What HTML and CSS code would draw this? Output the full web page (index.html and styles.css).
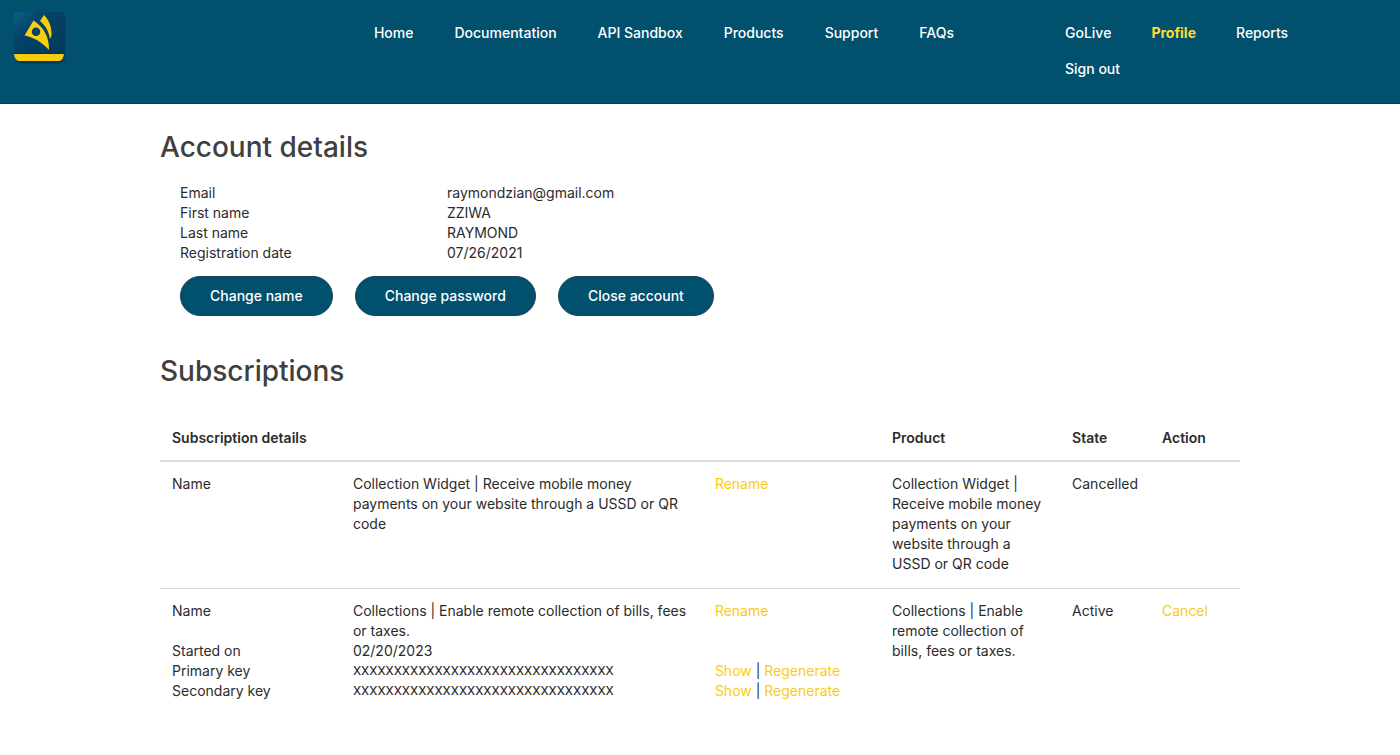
FILE: index.html
```html
<!DOCTYPE html>
<html lang="en">
<head>
<meta charset="utf-8">
<title>Profile</title>
<meta name="viewport" content="width=device-width, initial-scale=1">
<link rel="stylesheet" href="styles.css">
</head>
<body>
<header class="site-header">
  <a class="logo" href="#" aria-label="Developer portal home">
    <svg width="56" height="56" viewBox="0 0 56 56" aria-hidden="true">
      <defs>
        <linearGradient id="tile" x1="0" y1="0" x2="1" y2="1">
          <stop offset="0" stop-color="#0a5f86"/>
          <stop offset="0.35" stop-color="#034268"/>
          <stop offset="1" stop-color="#033a5c"/>
        </linearGradient>
      </defs>
      <path d="M7 3h43q3 0 3 4v39q0 8-6 8H9q-5 0-6-5z" fill="#022b41" opacity="0.45"/>
      <path d="M5 2h43q4 0 4 4v40H2V5q0-3 3-3z" fill="url(#tile)"/>
      <path d="M2 43h50v2H2z" fill="#02304a"/>
      <path d="M2 44h50q-1 7-5 7H7q-4 0-5-7z" fill="#f5cc10"/>
      <path fill-rule="evenodd" d="M21.500 10.500L12.500 25.500c9 2 17 6 24.500 14.500C37.500 28 32 17 21.500 10.500zM24 17.500a4.300 4.300 0 1 1 0 8.600 4.300 4.300 0 1 1 0-8.600z" fill="#f9cf0d"/>
      <path d="M32 5L28 11c6 5 9 11 10 18q2-3 1.500-7C39 16 37 10 32 5z" fill="#f9cf0d"/>
    </svg>
  </a>
  <nav class="nav nav-main" aria-label="Main">
    <a href="#">Home</a>
    <a href="#">Documentation</a>
    <a href="#">API Sandbox</a>
    <a href="#">Products</a>
    <a href="#">Support</a>
    <a href="#">FAQs</a>
  </nav>
  <nav class="nav nav-user" aria-label="Account">
    <a href="#">GoLive</a>
    <a class="active" href="#" aria-current="page">Profile</a>
    <a href="#">Reports</a>
    <a href="#">Sign out</a>
  </nav>
</header>
<main class="page">
  <section>
    <h1 class="heading">Account details</h1>
    <div class="account">
      <dl class="facts">
        <dt>Email</dt><dd>raymondzian@gmail.com</dd>
        <dt>First name</dt><dd>ZZIWA</dd>
        <dt>Last name</dt><dd>RAYMOND</dd>
        <dt>Registration date</dt><dd>07/26/2021</dd>
      </dl>
      <div class="buttons">
        <button class="btn" type="button">Change name</button>
        <button class="btn" type="button">Change password</button>
        <button class="btn" type="button">Close account</button>
      </div>
    </div>
  </section>
  <section class="subscriptions">
    <h1 class="heading">Subscriptions</h1>
    <table class="table">
      <thead>
        <tr>
          <th class="col-details" scope="col">Subscription details</th>
          <th class="col-product" scope="col">Product</th>
          <th class="col-state" scope="col">State</th>
          <th class="col-action" scope="col">Action</th>
        </tr>
      </thead>
      <tbody>
        <tr>
          <td>
            <div class="details">
              <span>Name</span>
              <span>Collection Widget | Receive mobile money payments on your website through a USSD or QR code</span>
              <span><a class="link" href="#">Rename</a></span>
            </div>
          </td>
          <td>Collection Widget | Receive mobile money payments on your website through a USSD or QR code</td>
          <td>Cancelled</td>
          <td></td>
        </tr>
        <tr>
          <td>
            <div class="details">
              <span>Name</span>
              <span>Collections | Enable remote collection of bills, fees or taxes.</span>
              <span><a class="link" href="#">Rename</a></span>
            </div>
            <div class="details">
              <span>Started on</span>
              <span>02/20/2023</span>
            </div>
            <div class="details">
              <span>Primary key</span>
              <span class="key">XXXXXXXXXXXXXXXXXXXXXXXXXXXXXXXX</span>
              <span><a class="link" href="#">Show</a> | <a class="link" href="#">Regenerate</a></span>
            </div>
            <div class="details">
              <span>Secondary key</span>
              <span class="key">XXXXXXXXXXXXXXXXXXXXXXXXXXXXXXXX</span>
              <span><a class="link" href="#">Show</a> | <a class="link" href="#">Regenerate</a></span>
            </div>
          </td>
          <td>Collections | Enable remote collection of bills, fees or taxes.</td>
          <td>Active</td>
          <td><a class="link" href="#">Cancel</a></td>
        </tr>
      </tbody>
    </table>
  </section>
</main>
</body>
</html>
```
FILE: styles.css
```css
* {
  box-sizing: border-box;
}

body {
  margin: 0;
  background: #fff;
  color: #2b2b2b;
  font-family: Inter, "Liberation Sans", sans-serif;
  font-size: 14px;
  line-height: 20px;
}

a {
  text-decoration: none;
}

.site-header {
  display: flex;
  align-items: flex-start;
  background: #00506e;
  border-bottom: 1px solid #003a5c;
  padding: 10px 100px 16px 12px;
}

.logo {
  display: block;
  line-height: 0;
}

.nav {
  display: flex;
  flex-wrap: wrap;
  padding-top: 5px;
}

.nav a {
  color: #fff;
  font-weight: 500;
  line-height: 36px;
}

.nav .active {
  color: #ffdc32;
  font-weight: 700;
}

.nav-main {
  column-gap: 41px;
  margin-left: auto;
  margin-right: 111px;
}

.nav-user {
  column-gap: 40px;
  flex: 0 0 235px;
}

.page {
  max-width: 1080px;
  margin: 0 auto;
  padding-top: 25px;
}

.heading {
  margin: 0;
  color: #404040;
  font-size: 28px;
  font-weight: 500;
  line-height: 36px;
}

.account {
  padding: 18px 0 0 20px;
}

.facts {
  display: grid;
  grid-template-columns: 267px 1fr;
  margin: 0;
}

.facts dd {
  margin: 0;
}

.buttons {
  display: flex;
  flex-wrap: wrap;
  gap: 22px;
  margin-top: 13px;
}

.btn {
  height: 40px;
  padding: 0 29px;
  border: 1px solid #1c4456;
  border-radius: 20px;
  background: #00506e;
  color: #fff;
  font: inherit;
  font-weight: 500;
}

.subscriptions {
  padding-top: 37px;
}

.table {
  width: 100%;
  margin-top: 27px;
  border-collapse: collapse;
  table-layout: fixed;
}

.table th,
.table td {
  padding: 12px 12px 14px;
  text-align: left;
  vertical-align: top;
}

.table th {
  padding-bottom: 12px;
  border-bottom: 2px solid #dcdcdc;
  font-weight: 600;
}

.table tr + tr td {
  border-top: 1px solid #dcdcdc;
}

.col-product {
  width: 16.6667%;
}

.col-state,
.col-action {
  width: 8.3333%;
}

.details {
  display: grid;
  grid-template-columns: 26% 52% 22%;
}

.details span:nth-child(2) {
  padding-right: 24px;
}

.key {
  font-family: Roboto, sans-serif;
  font-size: 13px;
}

.link {
  color: #fbcb14;
}
```
